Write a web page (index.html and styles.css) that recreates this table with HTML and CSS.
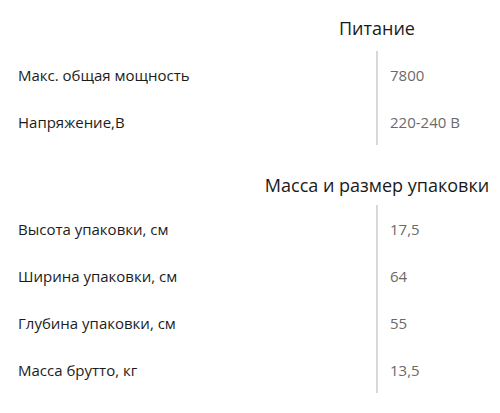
FILE: index.html
```html
<!DOCTYPE html>
<html lang="ru">
<head>
<meta charset="utf-8">
<link rel="stylesheet" href="styles.css">
</head>
<body>
<section class="group group-first">
  <h2 class="group-title">Питание</h2>
  <div class="rows">
    <div class="row"><div class="label">Макс. общая мощность</div><div class="value">7800</div></div>
    <div class="row"><div class="label">Напряжение,В</div><div class="value">220-240 В</div></div>
  </div>
</section>
<section class="group group-second">
  <h2 class="group-title">Масса и размер упаковки</h2>
  <div class="rows">
    <div class="row"><div class="label">Высота упаковки, см</div><div class="value">17,5</div></div>
    <div class="row"><div class="label">Ширина упаковки, см</div><div class="value">64</div></div>
    <div class="row"><div class="label">Глубина упаковки, см</div><div class="value">55</div></div>
    <div class="row"><div class="label">Масса брутто, кг</div><div class="value">13,5</div></div>
  </div>
</section>
</body>
</html>
```
FILE: styles.css
```css
html, body {
  margin: 0;
  padding: 0;
  background: #fff;
}
body {
  width: 500px;
  font-family: "Open Sans", "Noto Sans", sans-serif;
  color: #1c1c1c;
}
.group-first {
  padding-top: 11px;
}
.group-second {
  padding-top: 23px;
}
.group-title {
  margin: 0 0 0 254px;
  font-weight: 400;
  font-size: 18px;
  line-height: 34px;
  text-align: center;
  color: #1a1a1a;
}
.group-first .group-title {
  margin-bottom: 6px;
}
.group-second .group-title {
  margin-bottom: 3px;
}
.rows {
  display: flex;
  flex-direction: column;
}
.row {
  display: grid;
  grid-template-columns: 376px 1fr;
  height: 47px;
  align-items: stretch;
}
.label {
  display: flex;
  align-items: center;
  padding-left: 18px;
  font-size: 15px;
  color: #1c1c1c;
}
.value {
  display: flex;
  align-items: center;
  padding-left: 12px;
  border-left: 2px solid #d8d8d8;
  font-size: 15px;
  color: #6a6a6a;
}
```
